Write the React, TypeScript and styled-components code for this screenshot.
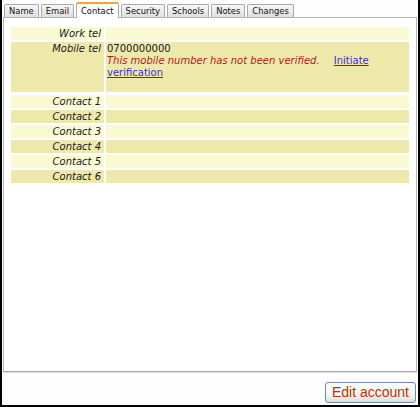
import React, { FC } from 'react';
import styled, { createGlobalStyle, css } from 'styled-components';

const LIGHT = '#fafad2';
const DARK = '#eee8aa';

const GlobalStyle = createGlobalStyle`
  html, body {
    margin: 0;
    padding: 0;
    background: #ffffff;
  }
  body {
    font-family: "DejaVu Sans", Verdana, sans-serif;
  }
`;

const Frame = styled.div`
  width: 420px;
  height: 407px;
  box-sizing: border-box;
  border: 2px solid #000;
  border-top: 0;
  background: #fdfdfd;
  padding-top: 2px;
  display: flex;
  flex-direction: column;
`;

const TabStrip = styled.div`
  display: flex;
  align-items: flex-end;
  gap: 2px;
  height: 15px;
  padding-left: 2px;
  position: relative;
  z-index: 1;
`;

const Tab = styled.div<{ $active?: boolean }>`
  box-sizing: border-box;
  height: 13px;
  padding: 0 4px;
  display: flex;
  align-items: center;
  border: 1px solid #a9a9a9;
  border-bottom: 0;
  border-radius: 2px 2px 0 0;
  background: linear-gradient(#f8f8f8, #dedede);
  color: #111;
  font-size: 8.4px;
  cursor: pointer;
  ${(p) =>
    p.$active &&
    css`
      height: 16px;
      margin-bottom: -1px;
      border-top: 2px solid #f2a33a;
      background: #ffffff;
    `}
`;

const Panel = styled.div`
  flex: 1;
  margin: 0 1px;
  box-sizing: border-box;
  border: 1px solid #b4b4b4;
  border-bottom-color: #a6a6a6;
  box-shadow: 0 1px 0 #dedede;
  background: #ffffff;
  padding: 9px 7px 0 7px;
`;

const Section = styled.div<{ $gapAbove?: number }>`
  display: grid;
  grid-template-columns: 93px 1fr;
  gap: 2px;
  margin-top: ${(p) => p.$gapAbove ?? 0}px;
`;

const Cell = styled.div<{ $shade: 'light' | 'dark' }>`
  background: ${(p) => (p.$shade === 'light' ? LIGHT : DARK)};
  min-height: 13px;
  font-size: 10px;
  line-height: 13px;
  color: #1a1a1a;
`;

const Label = styled(Cell)`
  font-style: italic;
  text-align: right;
  padding-right: 3px;
`;

const Value = styled(Cell)`
  padding-left: 1px;
`;

const MobileValue = styled(Value)`
  padding-bottom: 13px;
`;

const Notice = styled.div`
  line-height: 12px;
`;

const Warning = styled.span`
  color: #b01a1a;
  font-style: italic;
`;

const VerifyLink = styled.a`
  margin-left: 11px;
  color: #3434c8;
  text-decoration: underline;
  cursor: pointer;
`;

const Footer = styled.div`
  height: 33px;
  box-sizing: border-box;
  padding: 10px 2px 2px 0;
  display: flex;
  justify-content: flex-end;
`;

const EditButton = styled.button`
  height: 21px;
  padding: 0 6px;
  border: 1px solid #6f88b4;
  border-radius: 3px;
  background: linear-gradient(#ffffff, #f3f3ee 70%, #dcdcd4);
  color: #c42c08;
  font-family: "Liberation Sans", Arial, sans-serif;
  font-size: 14px;
  line-height: 19px;
  cursor: pointer;
`;

const tabs = ['Name', 'Email', 'Contact', 'Security', 'Schools', 'Notes', 'Changes'];
const contacts = [1, 2, 3, 4, 5, 6];

const App: FC = () => {
  return (
    <>
      <GlobalStyle />
      <Frame>
        <TabStrip>
          {tabs.map((t) => (
            <Tab key={t} $active={t === 'Contact'}>
              {t}
            </Tab>
          ))}
        </TabStrip>
        <Panel>
          <Section>
            <Label $shade="light">Work tel</Label>
            <Value $shade="light"></Value>
            <Label $shade="dark">Mobile tel</Label>
            <MobileValue $shade="dark">
              <div>0700000000</div>
              <Notice>
                <Warning>This mobile number has not been verified.</Warning>{' '}
                <VerifyLink>Initiate verification</VerifyLink>
              </Notice>
            </MobileValue>
          </Section>
          <Section $gapAbove={3}>
            {contacts.map((n) => {
              const shade = n % 2 === 1 ? 'light' : 'dark';
              return (
                <React.Fragment key={n}>
                  <Label $shade={shade}>Contact {n}</Label>
                  <Value $shade={shade}></Value>
                </React.Fragment>
              );
            })}
          </Section>
        </Panel>
        <Footer>
          <EditButton>Edit account</EditButton>
        </Footer>
      </Frame>
    </>
  );
};

export default App;
